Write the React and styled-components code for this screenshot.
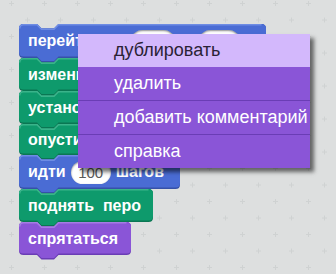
import React from "react";
import styled, { createGlobalStyle } from "styled-components";

const GlobalStyle = createGlobalStyle`
  html, body {
    margin: 0;
    padding: 0;
    background: #dddfdf;
  }
`;

const COLORS = {
  motion: { main: "#4a6cd4", dark: "#3651a8", light: "#6e8ce4" },
  pen: { main: "#0e9a6c", dark: "#0a7753", light: "#3ab38a" },
  looks: { main: "#8a55d7", dark: "#6a3db5", light: "#a57de3" },
};

// block geometry (Scratch 2 at 1.5x)
const R = 4.5;
const D = 4.5;
const L1 = 18;
const L2 = 22.5;
const R1 = 35;
const R2 = 39.5;

function shape(w, h) {
  return `M0,${R} Q0,0 ${R},0 L${L1},0 L${L2},${D} L${R1},${D} L${R2},0 L${w - R},0 Q${w},0 ${w},${R} L${w},${h - R} Q${w},${h} ${w - R},${h} L${R2},${h} L${R1},${h + D} L${L2},${h + D} L${L1},${h} L${R},${h} Q0,${h} 0,${h - R} Z`;
}

function topEdge(w) {
  const y = 0.75;
  return `M0.75,${R} Q0.75,${y} ${R},${y} L${L1},${y} L${L2},${D + y} L${R1},${D + y} L${R2},${y} L${w - R},${y}`;
}

const Canvas = styled.div`
  position: relative;
  width: 336px;
  height: 274px;
  overflow: hidden;
  background: #dddfdf;
`;

const Grid = styled.svg`
  position: absolute;
  inset: 0;
`;

const Stack = styled.div`
  position: absolute;
  left: 19px;
  top: 24px;
  display: flex;
  flex-direction: column;
`;

const BlockBox = styled.div`
  position: relative;
  width: ${(p) => p.$w}px;
  height: ${(p) => p.$h}px;
  display: flex;
  align-items: center;
  gap: 5px;
  padding-left: 9px;
  box-sizing: border-box;
  color: #fff;
  font-family: "Liberation Sans", Arial, sans-serif;
  font-weight: bold;
  font-size: 16px;
  white-space: pre;
`;

const Shape = styled.svg`
  position: absolute;
  left: 0;
  top: 0;
  overflow: visible;
`;

const Label = styled.span`
  position: relative;
`;

const Oval = styled.span`
  position: relative;
  display: inline-flex;
  align-items: center;
  justify-content: center;
  width: ${(p) => p.$w}px;
  height: 23px;
  border-radius: 12px;
  background: #fff;
  box-shadow: inset 0 1px 2px rgba(0, 0, 0, 0.45);
  color: #5a5a5a;
  font-weight: normal;
  font-size: 15px;
`;

function Block({ kind, w, h = 33, children }) {
  const c = COLORS[kind];
  return (
    <BlockBox $w={w} $h={h}>
      <Shape width={w} height={h + D}>
        <path d={shape(w, h)} fill={c.dark} />
        <path d={shape(w, h - 1.5)} fill={c.main} />
        <path d={topEdge(w)} fill="none" stroke={c.light} strokeWidth="1.5" />
      </Shape>
      {children}
    </BlockBox>
  );
}

const Menu = styled.div`
  position: absolute;
  left: 78px;
  top: 34px;
  width: 232px;
  display: flex;
  flex-direction: column;
  background: #8a55d7;
  box-shadow: 4px 4px 4px rgba(0, 0, 0, 0.55);
  font-family: "Liberation Sans", Arial, sans-serif;
  font-size: 18px;
`;

const MenuItem = styled.div`
  height: 33px;
  display: flex;
  align-items: center;
  padding-left: 36px;
  color: ${(p) => (p.$active ? "#2a2235" : "#fff")};
  background: ${(p) => (p.$active ? "#d3b8fc" : "#8a55d7")};
  border-top: ${(p) => (p.$line ? "1px solid #6a3db5" : "none")};
`;

export default function App() {
  return (
    <Canvas>
      <GlobalStyle />
      <Grid width="336" height="274">
        <defs>
          <pattern id="crosses" width="33" height="33" patternUnits="userSpaceOnUse">
            <path d="M9,3.5 h5 M11.5,1 v5 M25,20 h5 M27.5,17.5 v5" stroke="#cfd2d2" strokeWidth="1" />
          </pattern>
        </defs>
        <rect width="336" height="274" fill="url(#crosses)" />
      </Grid>
      <Stack>
        <Block kind="motion" w={247} h={34}>
          <Label>перейти в x:</Label>
          <Oval $w={44}>0</Oval>
          <Label>y:</Label>
          <Oval $w={41}>0</Oval>
        </Block>
        <Block kind="pen" w={250}>
          <Label>изменить цвет пера на</Label>
          <Oval $w={36}>10</Oval>
        </Block>
        <Block kind="pen" w={240}>
          <Label>установить размер пера</Label>
          <Oval $w={30}>1</Oval>
        </Block>
        <Block kind="pen" w={140} h={31}>
          <Label>опустить  перо</Label>
        </Block>
        <Block kind="motion" w={161} h={34}>
          <Label>идти</Label>
          <Oval $w={40}>100</Oval>
          <Label>шагов</Label>
        </Block>
        <Block kind="pen" w={134}>
          <Label>поднять  перо</Label>
        </Block>
        <Block kind="looks" w={112}>
          <Label>спрятаться</Label>
        </Block>
      </Stack>
      <Menu>
        <MenuItem $active>дублировать</MenuItem>
        <MenuItem>удалить</MenuItem>
        <MenuItem $line>добавить комментарий</MenuItem>
        <MenuItem $line>справка</MenuItem>
      </Menu>
    </Canvas>
  );
}
